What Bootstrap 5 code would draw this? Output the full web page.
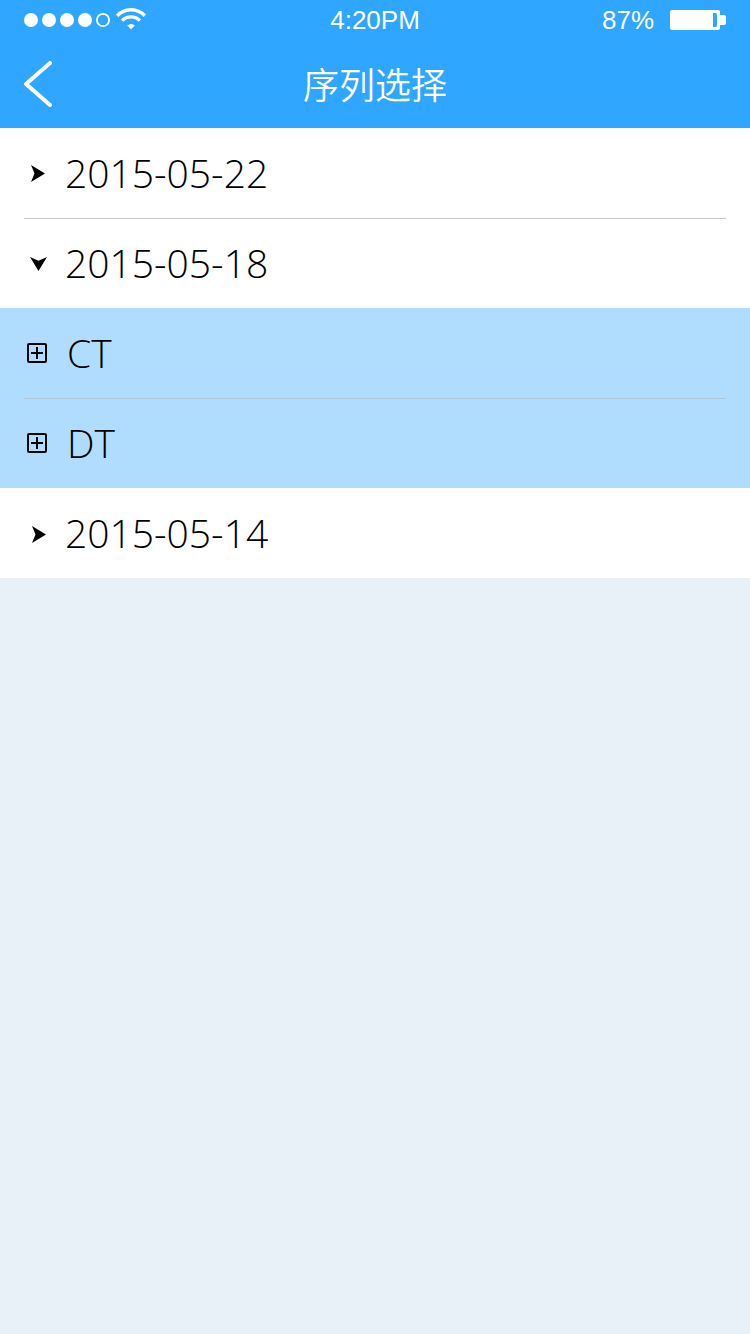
<!DOCTYPE html>
<html lang="zh-CN">
<head>
<meta charset="utf-8">
<meta name="viewport" content="width=device-width, initial-scale=1">
<title>序列选择</title>
<link href="https://cdn.jsdelivr.net/npm/bootstrap@5.3.0/dist/css/bootstrap.min.css" rel="stylesheet">
<style>
  body { background: #e8f0f8; color: #000; font-family: "Liberation Sans", "Noto Sans CJK SC", sans-serif; }
  svg { display: block; flex: none; }
  .app-head { background: #2fa6ff; color: #fff; }
  .status-bar { height: 40px; font-size: 26px; line-height: 40px; }
  .title-bar { height: 88px; }
  .title-bar h1 { font: 350 36px/86px "Noto Sans CJK SC", sans-serif; }
  .gutter { padding-left: 24px; padding-right: 24px; }
  .tree-row { height: 90px; font-family: "Open Sans", sans-serif; font-weight: 300; font-size: 39px; line-height: 88px; color: #000; }
  .divided { box-shadow: inset 0 1px #c8c8c8; }
  .mark-box { width: 41px; flex: none; }
  .study-list { background: #b0ddfd; }
  .study-list .divided { box-shadow: inset 0 1px #a9c6da; }
  .study-list .mark-box { width: 43px; }
  .caret-open { display: none; }
  [aria-expanded="true"] .caret-open { display: block; }
  [aria-expanded="true"] .caret-shut { display: none; }
</style>
</head>
<body>
<header class="app-head">
  <div class="status-bar row g-0 gutter">
    <div class="col d-flex align-items-center">
      <svg width="122" height="24" viewBox="0 0 122 24" fill="#fff" aria-label="信号">
        <circle cx="7" cy="12" r="7"/><circle cx="25" cy="12" r="7"/><circle cx="43" cy="12" r="7"/><circle cx="61" cy="12" r="7"/>
        <circle cx="79" cy="12" r="6.1" fill="none" stroke="#fff" stroke-width="1.8"/>
        <g fill="none" stroke="#fff" stroke-width="3.4">
          <path d="M93.200 7.800Q98.500 1.700 107 1.700T120.800 7.800"/>
          <path d="M98.200 12.600Q101.800 8.900 107 8.900T115.800 12.600"/>
        </g>
        <path d="M103.200 17.500Q107 14.300 110.800 17.500L107 21.200Z"/>
      </svg>
    </div>
    <div class="col-auto">4:20PM</div>
    <div class="col d-flex align-items-center justify-content-end">
      <span class="me-3">87%</span>
      <svg width="56" height="20" viewBox="0 0 56 20" fill="#fff" aria-label="电量">
        <path fill-rule="evenodd" d="M2 0H48Q50 0 50 2V5H54Q56 5 56 7V13Q56 15 54 15H50V18Q50 20 48 20H2Q0 20 0 18V2Q0 0 2 0ZM43 3V17H45Q47 17 47 15V5Q47 3 45 3Z"/>
      </svg>
    </div>
  </div>
  <div class="title-bar row g-0 gutter">
    <div class="col d-flex align-items-center">
      <button type="button" class="btn border-0 p-0" aria-label="返回">
        <svg width="28" height="46" viewBox="0 0 28 46" fill="none" stroke="#fff" stroke-width="4" stroke-linecap="round" stroke-linejoin="round"><path d="M26 2L2 23L26 44"/></svg>
      </button>
    </div>
    <h1 class="col-auto m-0">序列选择</h1>
    <div class="col"></div>
  </div>
</header>

<main>
  <div class="bg-white gutter">
    <button type="button" class="tree-row btn rounded-0 border-0 p-0 w-100 d-flex align-items-center text-start" aria-expanded="false">
      <span class="mark-box"><svg width="28" height="18" viewBox="0 0 28 18"><path d="M7 1L21 9.500L7 18L10.500 9.500Z"/></svg></span>2015-05-22
    </button>
    <button type="button" class="tree-row divided btn rounded-0 border-0 p-0 w-100 d-flex align-items-center text-start" data-bs-toggle="collapse" data-bs-target="#studies" aria-controls="studies" aria-expanded="true">
      <span class="mark-box">
        <svg class="caret-shut" width="28" height="18" viewBox="0 0 28 18"><path d="M7 1L21 9.500L7 18L10.500 9.500Z"/></svg>
        <svg class="caret-open" width="28" height="18" viewBox="0 0 28 18"><path d="M6 3L14.500 17L23 3L14.500 6.800Z"/></svg>
      </span>2015-05-18
    </button>
  </div>
  <div id="studies" class="study-list gutter collapse show">
    <button type="button" class="tree-row btn rounded-0 border-0 p-0 w-100 d-flex align-items-center text-start">
      <span class="mark-box"><svg width="26" height="20" viewBox="0 0 26 20" fill="none" stroke="#000" stroke-width="2"><rect x="4" y="1" width="18" height="18" rx="1"/><path d="M7 10H19M13 4V16"/></svg></span>CT
    </button>
    <button type="button" class="tree-row divided btn rounded-0 border-0 p-0 w-100 d-flex align-items-center text-start">
      <span class="mark-box"><svg width="26" height="20" viewBox="0 0 26 20" fill="none" stroke="#000" stroke-width="2"><rect x="4" y="1" width="18" height="18" rx="1"/><path d="M7 10H19M13 4V16"/></svg></span>DT
    </button>
  </div>
  <div class="bg-white gutter">
    <button type="button" class="tree-row btn rounded-0 border-0 p-0 w-100 d-flex align-items-center text-start" aria-expanded="false">
      <span class="mark-box"><svg width="28" height="20" viewBox="0 0 28 20"><path d="M8 3L22 11.500L8 20L11.500 11.500Z"/></svg></span>2015-05-14
    </button>
  </div>
</main>
<script src="https://cdn.jsdelivr.net/npm/bootstrap@5.3.0/dist/js/bootstrap.bundle.min.js"></script>
</body>
</html>
